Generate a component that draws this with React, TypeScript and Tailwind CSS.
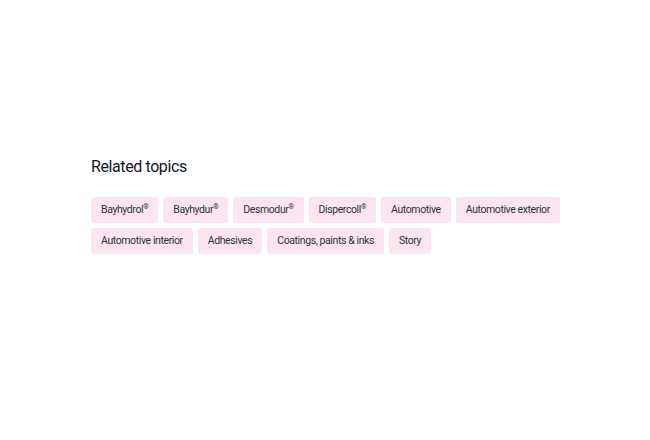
const topics = [
  "Bayhydrol®",
  "Bayhydur®",
  "Desmodur®",
  "Dispercoll®",
  "Automotive",
  "Automotive exterior",
  "Automotive interior",
  "Adhesives",
  "Coatings, paints & inks",
  "Story",
];

function Label({ text }: { text: string }) {
  if (!text.endsWith("®")) return <>{text}</>;
  return (
    <>
      {text.slice(0, -1)}
      <span className="relative -top-[3px] text-[7px]">®</span>
    </>
  );
}

export default function App() {
  return (
    <div className="min-h-screen w-full bg-white font-['Roboto',sans-serif] text-[#10181f]">
      <div className="pl-[91px] pt-[156px]">
        <h2 className="text-[16px] leading-[22px] font-normal tracking-[-0.4px]">Related topics</h2>
        <div className="mt-[19px] flex max-w-[480px] flex-wrap gap-x-[5px] gap-y-[5px]">
          {topics.map((t) => (
            <a
              key={t}
              href="#"
              className="flex h-[26px] items-center rounded-[3px] bg-[#fce4f0] px-[10px] text-[10.5px] tracking-[-0.4px] text-[#333]"
            >
              <Label text={t} />
            </a>
          ))}
        </div>
      </div>
    </div>
  );
}
